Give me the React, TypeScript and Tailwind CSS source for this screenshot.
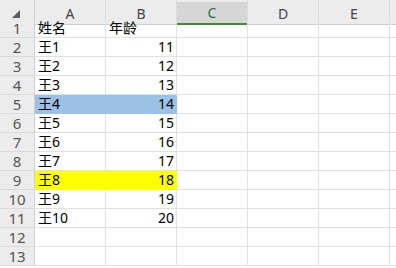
const cols = ["A", "B", "C", "D", "E", ""];

interface Row {
  name: string;
  age: string;
  fill?: "blue" | "yellow";
}

const rows: Row[] = [
  { name: "姓名", age: "年龄" },
  { name: "王1", age: "11" },
  { name: "王2", age: "12" },
  { name: "王3", age: "13" },
  { name: "王4", age: "14", fill: "blue" },
  { name: "王5", age: "15" },
  { name: "王6", age: "16" },
  { name: "王7", age: "17" },
  { name: "王8", age: "18", fill: "yellow" },
  { name: "王9", age: "19" },
  { name: "王10", age: "20" },
  { name: "", age: "" },
  { name: "", age: "" },
];

const font = { fontFamily: '"Noto Sans", "Noto Sans CJK SC", sans-serif' };

export default function App() {
  return (
    <div
      className="w-[396px] h-[268px] overflow-hidden bg-white"
      style={font}
    >
      <div className="grid grid-cols-[35px_71px_71px_71px_71px_71px_71px] auto-rows-[19px] w-[461px]">
        {/* header */}
        <div className="h-[25px] bg-[#ececec] border-r border-b border-[#d0d0d0] flex items-center justify-center">
          <svg width="8" height="8" viewBox="0 0 8 8" className="mt-[3px] ml-[-2px]">
            <polygon points="8,0 8,8 0,8" fill="#5a5a5a" />
          </svg>
        </div>
        {cols.map((c, idx) =>
          c === "C" ? (
            <div key={idx} className="h-[25px] bg-[#ececec] pt-[2px] border-r border-[#dadada]">
              <div className="h-[23px] bg-[#d6d6d6] border-b-2 border-[#3f8e2c] flex items-center justify-center text-[14px] text-[#217346]">
                {c}
              </div>
            </div>
          ) : (
            <div
              key={idx}
              className="h-[25px] bg-[#ececec] border-r border-b border-r-[#dadada] border-b-[#d0d0d0] flex items-center justify-center pt-[2px] text-[14px] text-[#444]"
            >
              {c}
            </div>
          )
        )}

        {rows.map((r, i) => {
          const fill =
            r.fill === "blue"
              ? "bg-[#9bc2e6] border-[#9bc2e6]"
              : r.fill === "yellow"
              ? "bg-[#ffff00] border-[#ffff00]"
              : "border-[#e1e1e1]";
          return (
            <div key={i} className="contents">
              <div className="bg-[#ececec] border-r border-b border-r-[#d0d0d0] border-b-[#dadada] flex items-center justify-center text-[15px] text-[#555]">
                {i + 1}
              </div>
              <div className={`border-r border-b ${fill} flex items-center pl-[3px] text-[14px] text-black leading-none`}>
                {r.name}
              </div>
              <div
                className={`border-r border-b ${fill} flex items-center ${
                  i === 0 ? "justify-start pl-[3px]" : "justify-end pr-[2px]"
                } text-[14px] text-black leading-none`}
              >
                {r.age}
              </div>
              {[0, 1, 2, 3].map((k) => (
                <div key={k} className="border-r border-b border-[#e1e1e1]" />
              ))}
            </div>
          );
        })}
      </div>
    </div>
  );
}
